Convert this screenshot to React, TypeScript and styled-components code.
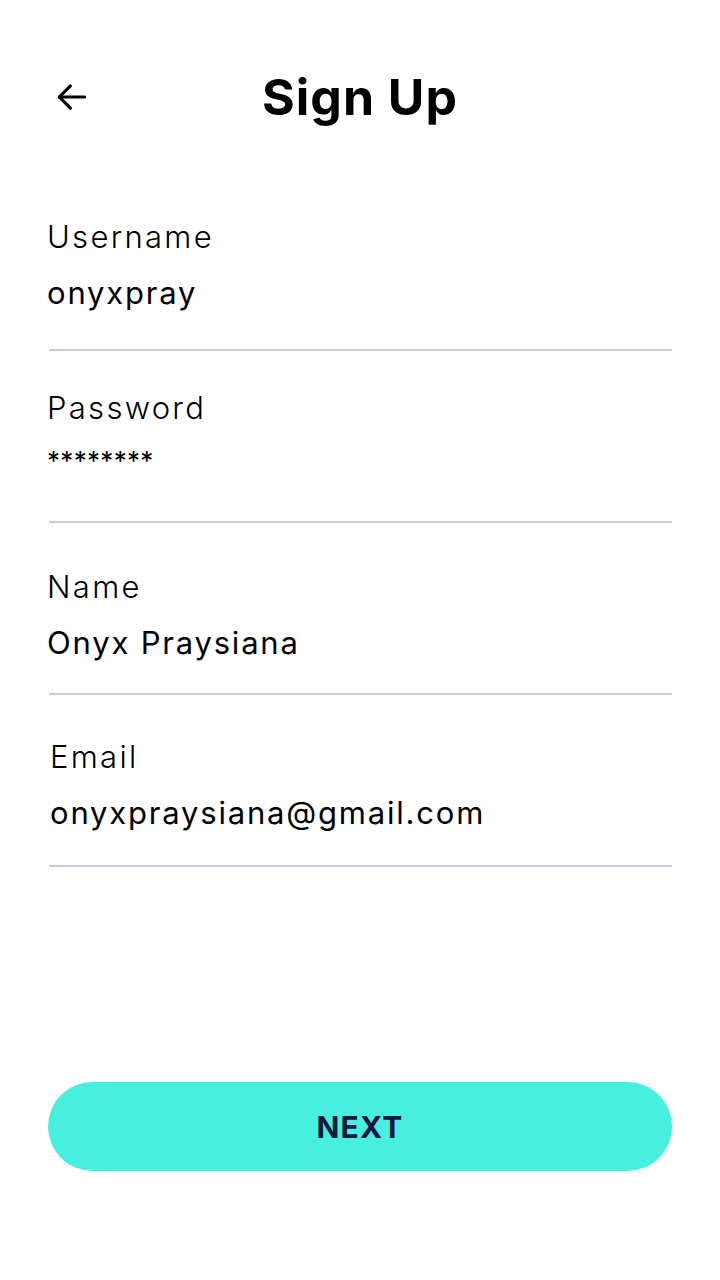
import React from 'react';
import styled, { createGlobalStyle } from 'styled-components';

const GlobalStyle = createGlobalStyle`
  * {
    box-sizing: border-box;
  }

  body {
    margin: 0;
    background: #ffffff;
    font-family: Inter, "Open Sans", sans-serif;
    color: #000000;
  }
`;

const Page = styled.div`
  min-height: 1280px;
  display: flex;
  flex-direction: column;
  padding: 0 48px;
`;

const Header = styled.header`
  display: grid;
  grid-template-columns: 80px 1fr 80px;
  align-items: center;
  height: 179px;
  padding-top: 18px;
`;

const BackButton = styled.button`
  display: flex;
  align-items: center;
  justify-content: center;
  width: 48px;
  height: 48px;
  padding: 0;
  border: none;
  background: none;
  cursor: pointer;
  margin-top: -3px;
`;

const Title = styled.h1`
  margin: 0;
  text-align: center;
  font-size: 50px;
  font-weight: 700;
  letter-spacing: 1px;
  margin-top: -3px;
`;

const Form = styled.div`
  display: flex;
  flex-direction: column;
  flex: 1;
`;

const Field = styled.div<{ $shift?: number; $top: number }>`
  height: 172px;
  display: flex;
  flex-direction: column;
  padding-top: ${(p) => p.$top}px;
  padding-left: ${(p) => p.$shift || 0}px;
  border-bottom: 2px solid #c5cbe3;
  margin-left: 1px;
`;

const Label = styled.label`
  margin-left: -2px;
  font-size: 31px;
  font-weight: 300;
  line-height: 36px;
  letter-spacing: 2.3px;
`;

const Value = styled.div<{ $secret?: boolean }>`
  margin-left: -2px;
  margin-top: ${(p) => (p.$secret ? '17px' : '20px')};
  font-size: ${(p) => (p.$secret ? '26px' : '31px')};
  font-weight: 400;
  line-height: 36px;
  letter-spacing: ${(p) => (p.$secret ? '0.3px' : '1.8px')};
`;

const Footer = styled.div`
  padding-bottom: 109px;
`;

const NextButton = styled.button`
  width: 100%;
  height: 89px;
  border: none;
  border-radius: 45px;
  background: #47f0de;
  color: #14173f;
  font-family: Inter, "Open Sans", sans-serif;
  font-size: 30px;
  font-weight: 700;
  letter-spacing: 1.2px;
  cursor: pointer;
`;

const fields = [
  { label: 'Username', value: 'onyxpray', top: 40 },
  { label: 'Password', value: '********', secret: true, top: 39 },
  { label: 'Name', value: 'Onyx Praysiana', top: 46 },
  { label: 'Email', value: 'onyxpraysiana@gmail.com', shift: 3, top: 44 },
];

function App() {
  return (
    <>
      <GlobalStyle />
      <Page>
        <Header>
          <BackButton aria-label="Back">
            <svg width="38" height="38" viewBox="0 0 24 24" fill="none" stroke="#000" strokeWidth="2" strokeLinecap="round" strokeLinejoin="round">
              <path d="M20 12H4" />
              <path d="M11 5l-7 7 7 7" />
            </svg>
          </BackButton>
          <Title>Sign Up</Title>
          <span />
        </Header>
        <Form>
          {fields.map((f) => (
            <Field key={f.label} $shift={f.shift} $top={f.top}>
              <Label>{f.label}</Label>
              <Value $secret={f.secret}>{f.value}</Value>
            </Field>
          ))}
        </Form>
        <Footer>
          <NextButton>NEXT</NextButton>
        </Footer>
      </Page>
    </>
  );
}

export default App;
